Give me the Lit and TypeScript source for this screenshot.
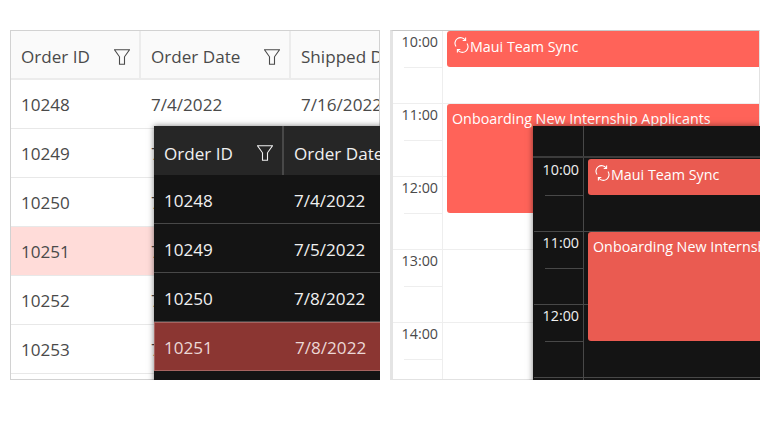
import { LitElement, html, css, svg } from "lit";
import { customElement, property } from "lit/decorators.js";

const ROWS = [
  ["10248", "7/4/2022", "7/16/2022"],
  ["10249", "7/5/2022", "7/10/2022"],
  ["10250", "7/8/2022", "7/12/2022"],
  ["10251", "7/8/2022", "7/15/2022"],
  ["10252", "7/9/2022", "7/11/2022"],
  ["10253", "7/10/2022", "7/16/2022"],
];

const filterIcon = svg`<svg class="filter" width="16" height="16" viewBox="0 0 16 16" fill="none" stroke="currentColor" stroke-width="1.1"><path d="M.5.7h15L10.5 7.8v7.5H5.5V7.8z"/></svg>`;

const syncIcon = svg`<svg class="sync" width="15" height="16" viewBox="0 0 15 16" fill="none" stroke="currentColor" stroke-width="1.1"><path d="M2 9.5A5.6 5.6 0 0 1 11.2 3"/><path d="M11.6.6v2.9H8.7"/><path d="M13 6.5A5.6 5.6 0 0 1 3.8 13"/><path d="M3.4 15.4v-2.9h2.9"/></svg>`;

@customElement("data-grid")
class DataGrid extends LitElement {
  @property({ type: Number }) rows = 6;
  static styles = css`
    :host { display: block; color: #4a4a4a; font: 17.1px "Open Sans", "Noto Sans", sans-serif; }
    .row { display: grid; grid-template-columns: 130px 150px 150px; height: 49px; box-sizing: border-box; border-bottom: 1px solid #e8e8e8; align-items: center; background: #fff; }
    .head { background: #fafafa; height: 49px; border-bottom: 2px solid #ececec; }
    .cell { padding: 0 0 0 10px; white-space: nowrap; overflow: hidden; }
    .head .cell { height: 100%; display: flex; align-items: center; justify-content: space-between; box-sizing: border-box; border-right: 2px solid #ececec; padding: 4px 9px 0 10px; }
    .sel { background: #ffdcd9; }
    .filter { flex: none; }
    :host(.dark) { color: #f0f0f0; background: #141414; }
    :host(.dark) .row { background: #141414; border-bottom-color: #484848; }
    :host(.dark) .cell { padding-top: 2px; }
    :host(.dark) .head { background: #262626; border-bottom: 0; }
    :host(.dark) .head .cell { border-right-color: #484848; padding-top: 5px; }
    :host(.dark) .sel { background: #8b3632; border: 1px solid #a66460; color: #ecd8d6; }
    :host(.dark) .sel .cell:first-child { padding-left: 9px; }
  `;
  render() {
    return html`
      <div class="row head">
        <div class="cell">Order ID ${filterIcon}</div>
        <div class="cell">Order Date ${filterIcon}</div>
        <div class="cell">Shipped Date</div>
      </div>
      ${ROWS.slice(0, this.rows).map(
        (r, i) => html`<div class="row ${i === 3 ? "sel" : ""}">
          ${r.map((c) => html`<div class="cell">${c}</div>`)}
        </div>`
      )}
    `;
  }
}

@customElement("day-schedule")
class DaySchedule extends LitElement {
  @property({ type: Array }) hours: string[] = [];
  static styles = css`
    :host { display: block; position: relative; color: #4a4a4a; font: 14.3px "Open Sans", "Noto Sans", sans-serif; }
    .hour { display: grid; grid-template-columns: 50px 1fr; height: 73px; box-sizing: border-box; border-bottom: 1px solid #eee; }
    .time { position: relative; border-right: 1px solid #eee; text-align: right; padding: 1px 4px 0 0; line-height: 20px; }
    .time::after { content: ""; position: absolute; left: 11px; right: 0; top: 36px; border-top: 1px solid #eee; }
    .event { position: absolute; left: 54px; right: 0; box-sizing: border-box; background: #ff6359; color: #fff; border-radius: 3px 0 0 3px; padding: 5px; display: flex; gap: 1px; align-items: flex-start; line-height: 19px; white-space: nowrap; overflow: hidden; }
    .sync { flex: none; margin: 1px 0 0 2px; }
    .sync + span { padding-top: 1px; }
    :host(.dark) { color: #f0f0f0; }
    :host(.dark) .hour { border-bottom-color: #484848; }
    :host(.dark) .time { border-right-color: #484848; }
    :host(.dark) .time::after { border-top-color: #484848; }
    :host(.dark) .event { background: #ea5b51; }
  `;
  render() {
    return html`
      ${this.hours.map((h) => html`<div class="hour"><div class="time">${h}</div><div></div></div>`)}
      <div class="event" style="top:0;height:36px">${syncIcon}<span>Maui Team Sync</span></div>
      <div class="event" style="top:73px;height:109px"><span>Onboarding New Internship Applicants</span></div>
    `;
  }
}

@customElement("app-root")
class AppRoot extends LitElement {
  static styles = css`
    :host { display: block; width: 770px; height: 440px; background: #fff; overflow: hidden; }
    .page { display: flex; gap: 10px; padding: 30px 10px 0; }
    .panel { position: relative; width: 370px; height: 350px; overflow: hidden; }
    .frame { height: 100%; box-sizing: border-box; overflow: hidden; border: 1px solid #d2d2d2; background: #fff; }
    .frame.sched { border-color: #e2e2e2; border-top-color: #c8c8c8; border-left-width: 3px; border-left-color: #e4e4e4; }
    .overlay { position: absolute; box-shadow: 0 0 6px rgba(0, 0, 0, 0.5); overflow: hidden; }
    .grid-over { left: 144px; top: 96px; width: 450px; height: 300px; }
    .sched-over { left: 143px; top: 96px; width: 227px; height: 300px; background: #141414; padding-left: 1px; box-sizing: border-box; }
    .bar { height: 33px; width: 50px; box-sizing: border-box; border-right: 1px solid #484848; position: relative; }
    .bar::after { content: ""; position: absolute; left: -1px; top: 30px; width: 240px; border-top: 2px solid #3c3c3c; }
  `;
  render() {
    return html`
      <div class="page">
        <div class="panel">
          <div class="frame"><data-grid></data-grid></div>
          <data-grid class="overlay grid-over dark" rows="4"></data-grid>
        </div>
        <div class="panel">
          <div class="frame sched"><day-schedule .hours=${["10:00", "11:00", "12:00", "13:00", "14:00"]}></day-schedule></div>
          <div class="overlay sched-over">
            <div class="bar"></div>
            <day-schedule class="dark" .hours=${["10:00", "11:00", "12:00", "13:00"]}></day-schedule>
          </div>
        </div>
      </div>
    `;
  }
}
